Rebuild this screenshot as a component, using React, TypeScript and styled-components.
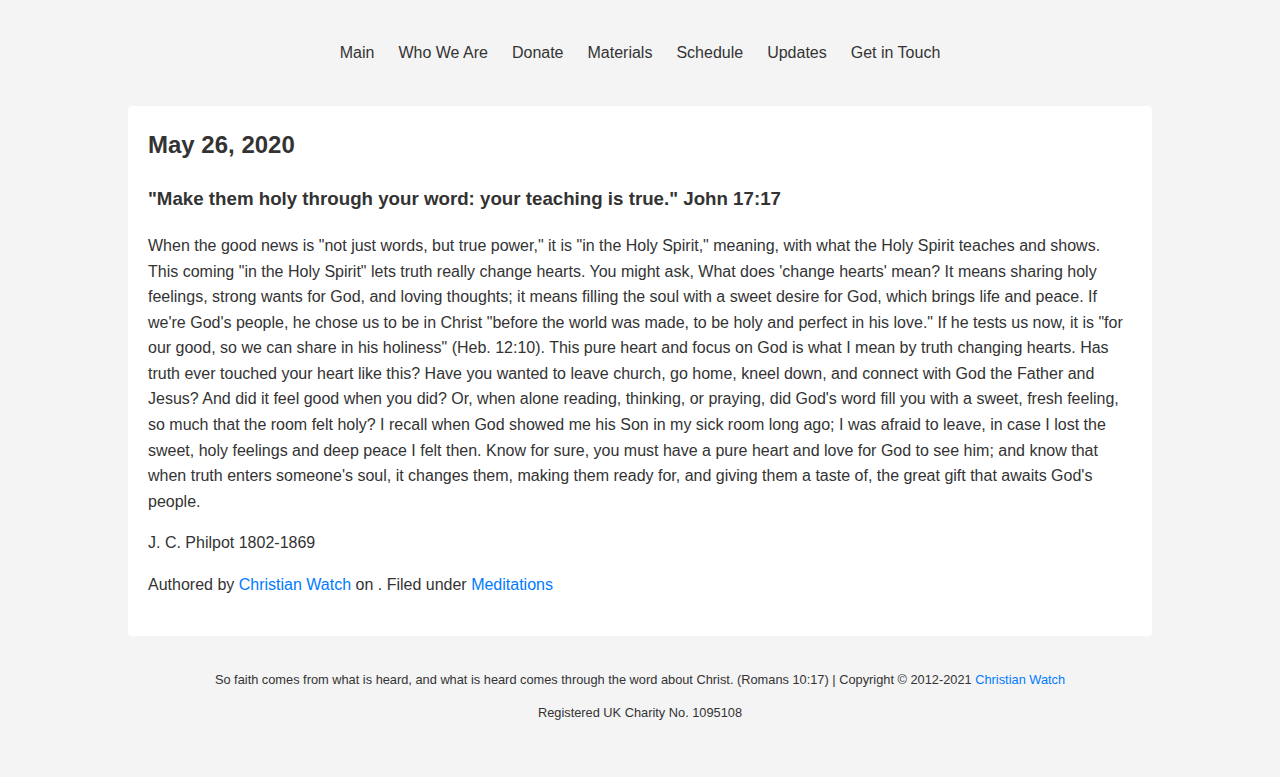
import React from "react";
import styled, { createGlobalStyle } from "styled-components";

const Global = createGlobalStyle`
  html, body { margin: 0; padding: 0; background: #f4f4f4; }
  body {
    font-family: "Liberation Sans", Arial, Helvetica, sans-serif;
    color: #333;
    font-size: 16px;
    line-height: 1.6;
  }
  * { box-sizing: border-box; }
`;

const Header = styled.header`
  padding: 40px 0;
`;

const Nav = styled.nav`
  display: flex;
  justify-content: center;
`;

const NavLink = styled.a`
  color: #333;
  text-decoration: none;
  padding: 0 12px;
  font-size: 16px;
`;

const Main = styled.main`
  max-width: 1024px;
  margin: 0 auto;
`;

const Card = styled.article`
  background: #fff;
  border-radius: 4px;
  padding: 20px 20px 22px;
`;

const Title = styled.h1`
  font-size: 24px;
  font-weight: bold;
  margin: 0 0 20px;
  line-height: 1.6;
`;

const Verse = styled.h2`
  font-size: 18.72px;
  font-weight: bold;
  margin: 0 0 19px;
  line-height: 1.6;
`;

const Para = styled.p`
  margin: 0 0 16px;
`;

const Link = styled.a`
  color: #007bff;
  text-decoration: none;
`;

const Footer = styled.footer`
  text-align: center;
  font-size: 12.8px;
  padding: 34px 0 30px;
`;

const FootLine = styled.p`
  margin: 0 0 13px;
`;

const navItems = ["Main", "Who We Are", "Donate", "Materials", "Schedule", "Updates", "Get in Touch"];

export default function App() {
  return (
    <>
      <Global />
      <Header>
        <Nav>
          {navItems.map((n) => (
            <NavLink key={n} href="#">{n}</NavLink>
          ))}
        </Nav>
      </Header>
      <Main>
        <Card>
          <Title>May 26, 2020</Title>
          <Verse>"Make them holy through your word: your teaching is true." John 17:17</Verse>
          <Para>
            When the good news is "not just words, but true power," it is "in the Holy Spirit," meaning, with what the Holy Spirit teaches and shows. This coming "in the Holy Spirit" lets truth really change hearts. You might ask, What does 'change hearts' mean? It means sharing holy feelings, strong wants for God, and loving thoughts; it means filling the soul with a sweet desire for God, which brings life and peace. If we're God's people, he chose us to be in Christ "before the world was made, to be holy and perfect in his love." If he tests us now, it is "for our good, so we can share in his holiness" (Heb. 12:10). This pure heart and focus on God is what I mean by truth changing hearts. Has truth ever touched your heart like this? Have you wanted to leave church, go home, kneel down, and connect with God the Father and Jesus? And did it feel good when you did? Or, when alone reading, thinking, or praying, did God's word fill you with a sweet, fresh feeling, so much that the room felt holy? I recall when God showed me his Son in my sick room long ago; I was afraid to leave, in case I lost the sweet, holy feelings and deep peace I felt then. Know for sure, you must have a pure heart and love for God to see him; and know that when truth enters someone's soul, it changes them, making them ready for, and giving them a taste of, the great gift that awaits God's people.
          </Para>
          <Para>J. C. Philpot 1802-1869</Para>
          <Para>
            Authored by <Link href="#">Christian Watch</Link> on . Filed under <Link href="#">Meditations</Link>
          </Para>
        </Card>
      </Main>
      <Footer>
        <FootLine>
          So faith comes from what is heard, and what is heard comes through the word about Christ. (Romans 10:17) | Copyright © 2012-2021 <Link href="#">Christian Watch</Link>
        </FootLine>
        <FootLine>Registered UK Charity No. 1095108</FootLine>
      </Footer>
    </>
  );
}
